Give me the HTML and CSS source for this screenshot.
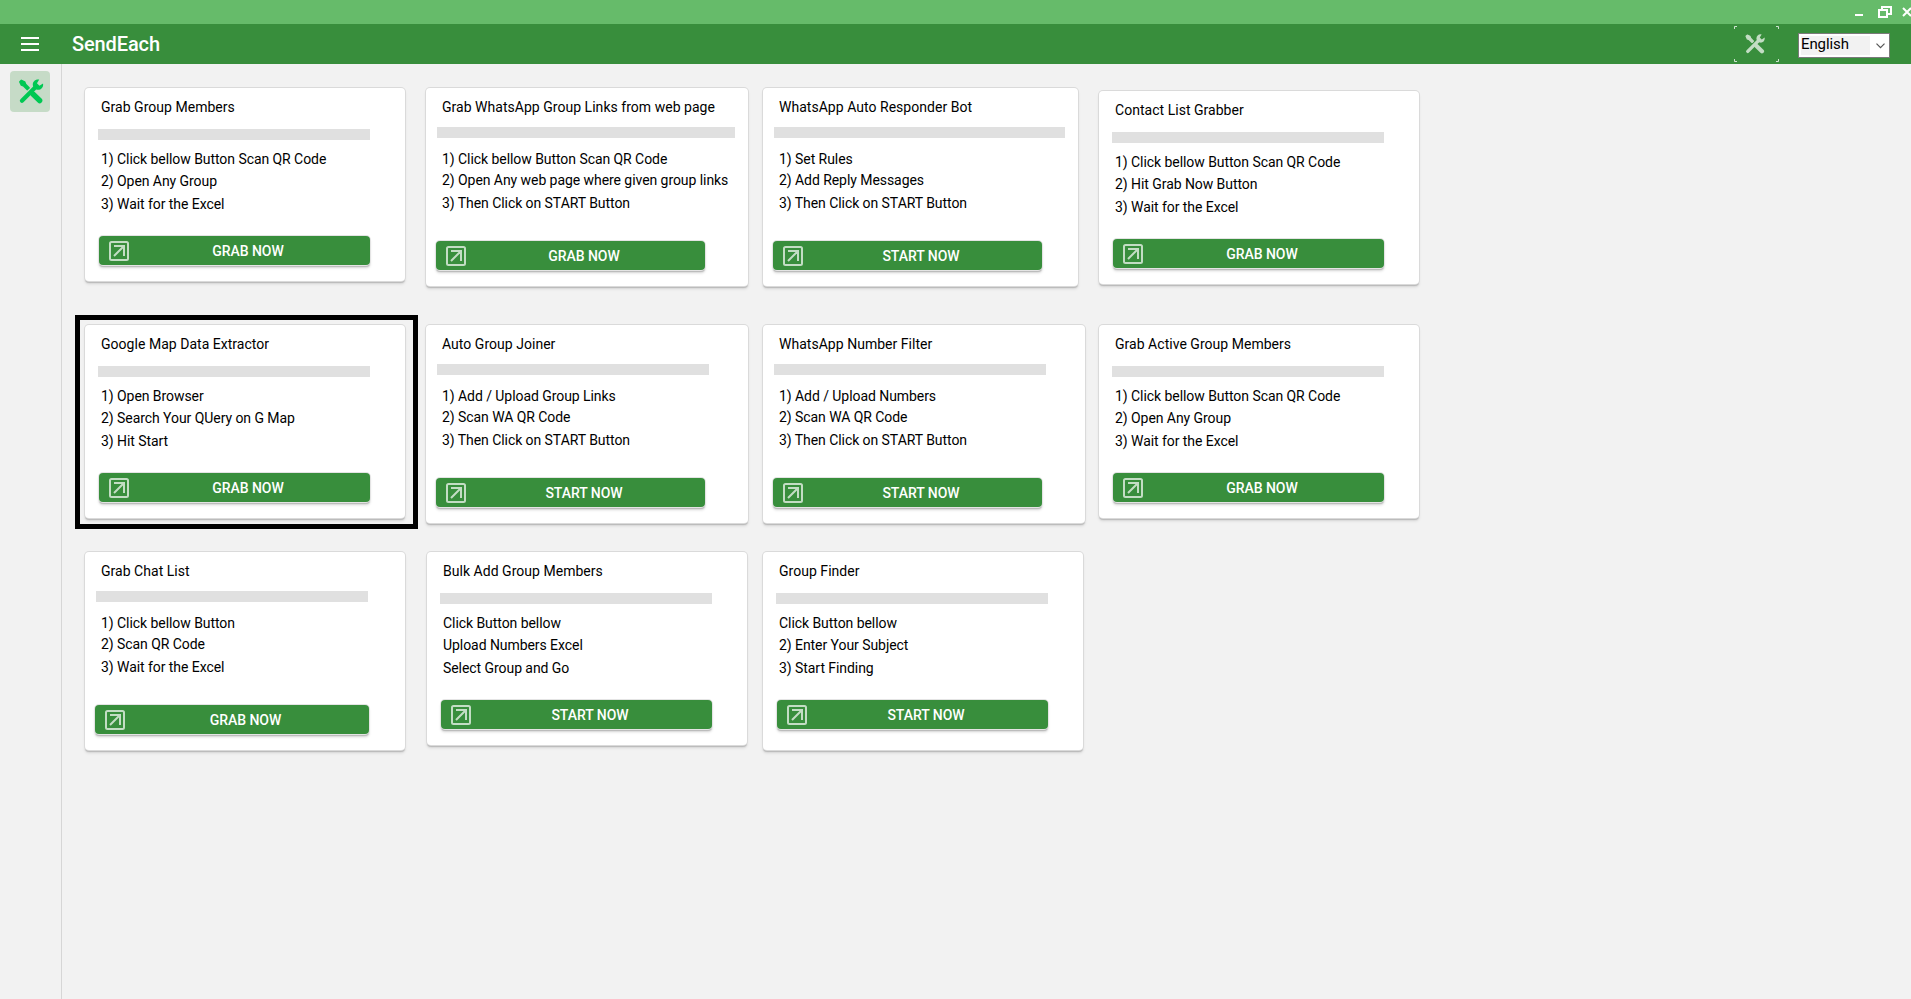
FILE: index.html
```html
<!DOCTYPE html>
<html lang="en">
<head>
<meta charset="utf-8">
<title>SendEach</title>
<link rel="stylesheet" href="styles.css">
</head>
<body>
<svg class="defs" width="0" height="0" aria-hidden="true">
  <symbol id="tools" viewBox="0 0 26 26">
    <path d="M3 1.400 6.400 3 7.400 5.500 11 9.200 9.200 11 5.500 7.400 3 6.400 1.400 3Z" fill="currentColor" stroke="currentColor" stroke-width="1.600" stroke-linejoin="round"/>
    <path d="M15 15.600 22 22.400" stroke="currentColor" stroke-width="5.600" stroke-linecap="round"/>
    <path d="M3.600 22.600 17.600 8.600" stroke="currentColor" stroke-width="4.400" stroke-linecap="round"/>
    <path d="M21.600.6 19.200 4.400 21.800 7 25.500 4.700C26.300 8.500 23.500 11.800 19.500 11.200L16 10 14.900 6.500C14.400 2.400 18 -.4 21.600.6Z" fill="currentColor"/>
  </symbol>
  <symbol id="launch" viewBox="0 0 20 20">
    <rect x="1" y="1" width="18" height="18" rx="1.500" fill="none" stroke="currentColor" stroke-width="2"/>
    <path d="M5 5H15V15M15 5 5 15" fill="none" stroke="currentColor" stroke-width="2"/>
  </symbol>
</svg>
<div class="titlebar">
  <svg class="window-controls" width="60" height="24" viewBox="0 0 60 24" fill="none" stroke="#fff" stroke-width="2">
    <path d="M4 15H12"/>
    <path d="M28 10H36V17H28Z M31 10V7H40V14H36"/>
    <path d="M52 8 60 16M60 8 52 16"/>
  </svg>
</div>
<header class="appbar">
  <svg class="menu" width="18" height="14" viewBox="0 0 18 14"><path d="M0 1H18M0 7H18M0 13H18" stroke="#fff" stroke-width="2"/></svg>
  <h1 class="brand">SendEach</h1>
  <div class="tab">
    <svg class="corners" width="46" height="36" viewBox="0 0 46 36"><path d="M.5 3V.5H3M42 .5H44.500V3M44.500 33V35.500H42M3 35.500H.5V33" fill="none" stroke="#cfe3d0"/></svg>
    <svg class="tab-icon" width="20" height="20"><use href="#tools"/></svg>
  </div>
  <div class="language"><span class="language-value">English</span>
    <svg width="9" height="6" viewBox="0 0 9 6"><path d="M.5.700 4.500 4.700 8.500.7" fill="none" stroke="#555" stroke-width="1.200"/></svg>
  </div>
</header>
<div class="body">
  <nav class="sidebar"><div class="side-item"><svg width="26" height="25"><use href="#tools"/></svg></div></nav>
  <main class="grid">
    <section class="card short"><h2>Grab Group Members</h2><div class="bar"></div><p>1) Click bellow Button Scan QR Code</p><p>2) Open Any Group</p><p>3) Wait for the Excel</p><div class="btn"><svg><use href="#launch"/></svg><span>GRAB NOW</span></div></section>
    <section class="card wide tall"><h2>Grab WhatsApp Group Links from web page</h2><div class="bar bar-298"></div><p>1) Click bellow Button Scan QR Code</p><p>2) Open Any web page where given group links</p><p>3) Then Click on START Button</p><div class="btn"><svg><use href="#launch"/></svg><span>GRAB NOW</span></div></section>
    <section class="card narrow tall"><h2>WhatsApp Auto Responder Bot</h2><div class="bar bar-291"></div><p>1) Set Rules</p><p>2) Add Reply Messages</p><p>3) Then Click on START Button</p><div class="btn"><svg><use href="#launch"/></svg><span>START NOW</span></div></section>
    <section class="card short lowered"><h2>Contact List Grabber</h2><div class="bar"></div><p>1) Click bellow Button Scan QR Code</p><p>2) Hit Grab Now Button</p><p>3) Wait for the Excel</p><div class="btn"><svg><use href="#launch"/></svg><span>GRAB NOW</span></div></section>

    <section class="card short selected"><h2>Google Map Data Extractor</h2><div class="bar"></div><p>1) Open Browser</p><p>2) Search Your QUery on G Map</p><p>3) Hit Start</p><div class="btn"><svg><use href="#launch"/></svg><span>GRAB NOW</span></div></section>
    <section class="card wide tall"><h2>Auto Group Joiner</h2><div class="bar"></div><p>1) Add / Upload Group Links</p><p>2) Scan WA QR Code</p><p>3) Then Click on START Button</p><div class="btn"><svg><use href="#launch"/></svg><span>START NOW</span></div></section>
    <section class="card wide tall"><h2>WhatsApp Number Filter</h2><div class="bar"></div><p>1) Add / Upload Numbers</p><p>2) Scan WA QR Code</p><p>3) Then Click on START Button</p><div class="btn"><svg><use href="#launch"/></svg><span>START NOW</span></div></section>
    <section class="card short"><h2>Grab Active Group Members</h2><div class="bar"></div><p>1) Click bellow Button Scan QR Code</p><p>2) Open Any Group</p><p>3) Wait for the Excel</p><div class="btn"><svg><use href="#launch"/></svg><span>GRAB NOW</span></div></section>

    <section class="card tall chat"><h2>Grab Chat List</h2><div class="bar"></div><p>1) Click bellow Button</p><p>2) Scan QR Code</p><p>3) Wait for the Excel</p><div class="btn"><svg><use href="#launch"/></svg><span>GRAB NOW</span></div></section>
    <section class="card short inset"><h2>Bulk Add Group Members</h2><div class="bar"></div><p>Click Button bellow</p><p>Upload Numbers Excel</p><p>Select Group and Go</p><div class="btn"><svg><use href="#launch"/></svg><span>START NOW</span></div></section>
    <section class="card short extended"><h2>Group Finder</h2><div class="bar"></div><p>Click Button bellow</p><p>2) Enter Your Subject</p><p>3) Start Finding</p><div class="btn"><svg><use href="#launch"/></svg><span>START NOW</span></div></section>
  </main>
</div>
</body>
</html>
```
FILE: styles.css
```css
* { box-sizing: border-box; }
body {
  margin: 0;
  height: 999px;
  display: flex;
  flex-direction: column;
  overflow: hidden;
  background: #f2f2f2;
  color: #000;
  font-family: Roboto, sans-serif;
  font-size: 14px;
}
svg { display: block; flex: none; }
.defs { position: absolute; }

.titlebar { height: 24px; flex: none; display: flex; justify-content: flex-end; background: #66bb6a; }
.window-controls { overflow: hidden; }

.appbar { height: 40px; flex: none; display: flex; align-items: center; background: #388e3c; }
.menu { margin-left: 21px; }
.brand { margin: 0 auto 0 33px; color: #fff; font-size: 20px; font-weight: 500; line-height: 40px; letter-spacing: -.12px; }
.tab { width: 45px; height: 36px; display: grid; place-items: center; color: #c3ddc4; }
.tab > svg { grid-area: 1 / 1; }
.tab-icon { margin-right: 5px; }
.language {
  width: 92px; height: 25px;
  margin: 3px 21px 0 19px;
  padding: 2px 4px 2px 2px;
  display: flex; align-items: center; justify-content: space-between;
  background: #fff; border: 1px solid #7a7a7a;
}
.language-value { width: 69px; height: 19px; line-height: 17px; background: #f2f2f2; font-size: 15px; letter-spacing: -.4px; letter-spacing: -.1px; }

.body { flex: 1; display: flex; }
.sidebar { width: 62px; flex: none; border-right: 1px solid #d6d6d6; padding: 7px 10px; }
.side-item { width: 40px; height: 41px; padding: 0 0 1px 2px; border-radius: 4px; background: #c6dbc7; color: #00c853; display: grid; place-items: center; }

.grid {
  padding: 24px 0 0 23px;
  display: grid;
  grid-template-columns: 341px 337px 336px 320px;
  grid-template-rows: 237px 227px 198px;
  align-content: start; align-items: start;
}
.card {
  width: 320px;
  display: grid;
  align-content: start;
  padding-left: 16px;
  background: #fff;
  border-radius: 4px;
  box-shadow: 0 0 0 1px #dadada, 0 2px 1px #b9b9b9, 0 3px 3px #d6d6d6;
}
.card h2, .card p { margin: 0; font-size: 14px; font-weight: 400; line-height: 16px; white-space: nowrap; }
.card h2 { margin-top: 11px; letter-spacing: .03px; }
.card p { letter-spacing: -.06px; }
.bar { width: 272px; height: 11px; background: #e0e0e0; }
.bar-298 { width: 298px; }
.bar-291 { width: 291px; }
.btn {
  height: 29px;
  display: flex; align-items: center;
  padding-left: 10px;
  border-radius: 4px;
  background: #388e3c; color: #fff;
  font-weight: 500;
  box-shadow: 0 0 0 1px #e4e4e4, 0 2px 1px #b9b9b9, 0 3px 3px #d6d6d6;
}
.btn svg { width: 20px; height: 20px; color: #c3ddc4; }
.btn span { flex: 1; text-align: center; margin-right: 3px; letter-spacing: -.05px; }

.short { height: 193px; grid-template-rows: 41px 22px 22px 23px 40px 29px; }
.tall { height: 198px; grid-template-rows: 39px 24px 21px 23px 46px 29px; }
.wide { width: 322px; }
.narrow { width: 315px; }
.lowered { margin-top: 3px; }
.inset { margin-left: 1px; }
.extended { height: 198px; }
.short .bar { margin-left: -3px; }
.short .btn { width: 271px; margin-left: -2px; }
.tall .bar { margin-left: -5px; }
.tall .btn { width: 269px; margin-left: -6px; }
.chat .btn { width: 274px; }

/* Highlight frame around the selected card */
.selected { position: relative; }
.selected::after {
  content: "";
  position: absolute;
  inset: -10px -13px -11px -10px;
  border: 5px solid #000;
}
```
